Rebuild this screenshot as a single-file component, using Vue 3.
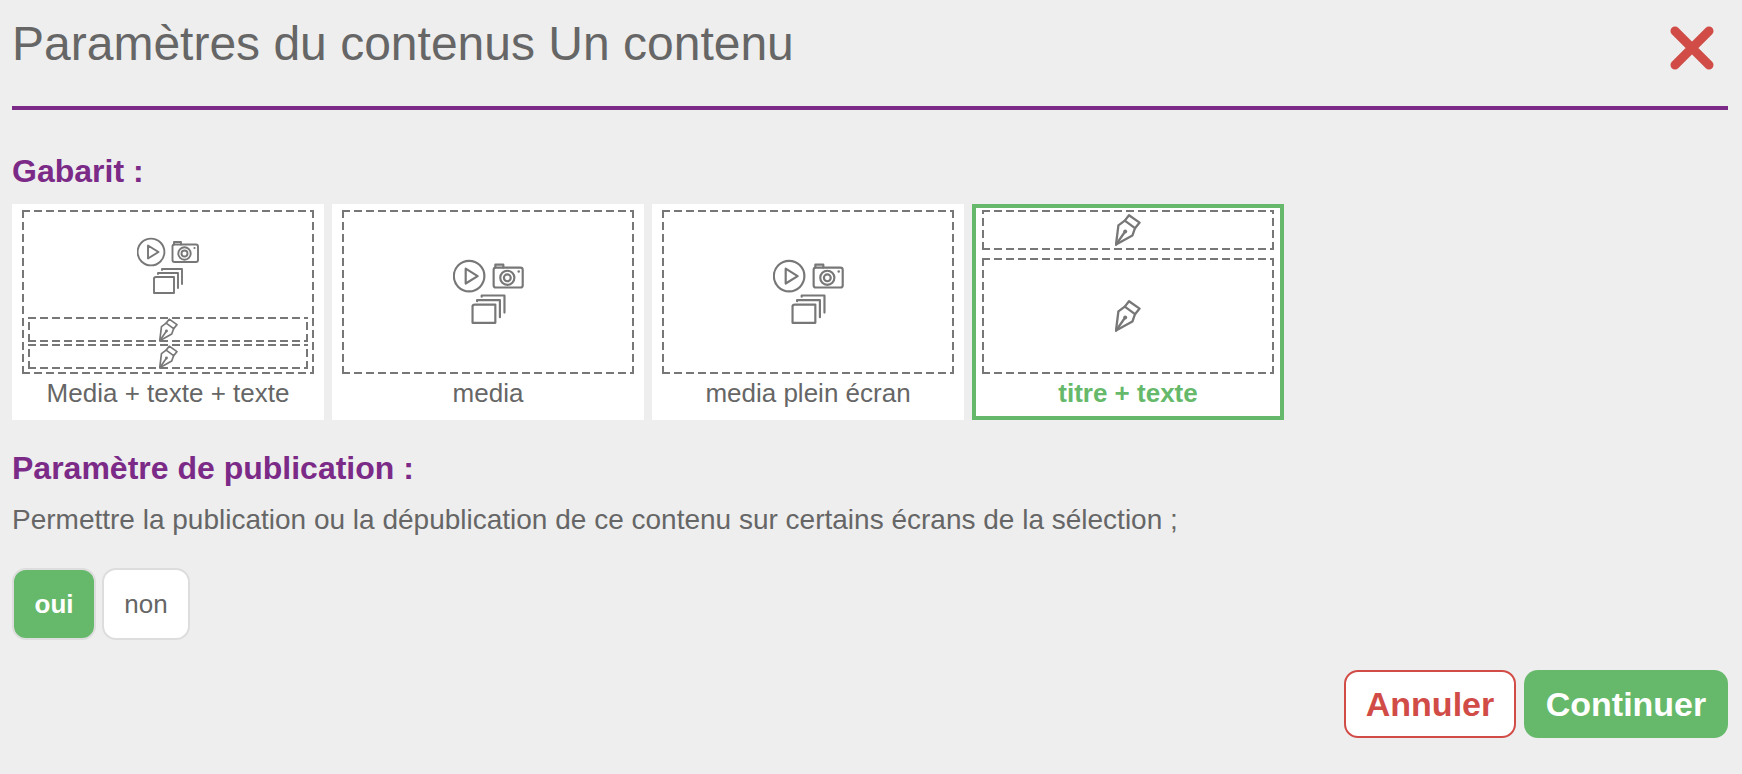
<script setup>
const templates = [
  { id: 'mtt', label: 'Media + texte + texte', zones: [{ type: 'media-mixed' }] },
  { id: 'm', label: 'media', zones: [{ type: 'media' }] },
  { id: 'mpe', label: 'media plein écran', zones: [{ type: 'media' }] },
  { id: 'tt', label: 'titre + texte', active: true, zones: [{ type: 'title' }, { type: 'text' }] }
]
</script>

<template>
  <main class="dialog">
    <svg class="sprite" aria-hidden="true">
      <symbol id="pen" viewBox="0 0 26 32">
        <g fill="none" stroke="#777" stroke-width="2.3" stroke-linejoin="round" stroke-linecap="round">
          <path d="M14 1.2 24.6 8.6 20 14.2 9.8 6.6Z" />
          <path d="M9.8 6.6 3.4 11.4 1 30.6 17.4 21.6 20 14.2" />
          <path d="M1 30.6 9.8 18" />
        </g>
        <circle cx="10.2" cy="17.4" r="2" fill="#777" />
      </symbol>
      <symbol id="media" viewBox="0 0 62 57">
        <g fill="none" stroke="#777" stroke-width="1.9" stroke-linejoin="round" stroke-linecap="round">
          <circle cx="14" cy="15" r="13.4" />
          <path d="M11 8.5 21.5 15 11 21.5Z" />
          <path d="M37 7.5V5H44V7.5" />
          <rect x="35.5" y="7.5" width="25.5" height="17.5" rx="2" />
          <circle cx="47.5" cy="16.5" r="6.2" />
          <circle cx="47.5" cy="16.5" r="3" />
          <path d="M17 41V56H37V40H19Q17 40 17 42Z" />
          <path d="M21 37V36H41V51" />
          <path d="M25 33V32H45V47" />
        </g>
        <circle cx="57.5" cy="11" r="1.1" fill="#777" />
      </symbol>
    </svg>

    <header class="head">
      <h1>Paramètres du contenus Un contenu</h1>
      <svg class="close" viewBox="0 0 44 44" aria-label="Fermer">
        <path d="M5 5 39 39M39 5 5 39" fill="none" stroke="#d14c47" stroke-width="9" stroke-linecap="round" />
      </svg>
    </header>

    <h2 class="gabarit">Gabarit :</h2>
    <section class="cards">
      <article v-for="t in templates" :key="t.id" class="card" :class="{ active: t.active }">
        <div class="zones">
          <template v-for="(z, i) in t.zones" :key="i">
            <div v-if="z.type === 'media-mixed'" class="zone mixed">
              <div class="mixed-media"><svg class="ico m-small"><use href="#media" /></svg></div>
              <div class="sub dash"><svg class="ico p-small"><use href="#pen" /></svg></div>
              <div class="sub dash"><svg class="ico p-small"><use href="#pen" /></svg></div>
            </div>
            <div v-else-if="z.type === 'media'" class="zone full dash">
              <svg class="ico m-big"><use href="#media" /></svg>
            </div>
            <div v-else-if="z.type === 'title'" class="zone title dash">
              <svg class="ico p-big"><use href="#pen" /></svg>
            </div>
            <div v-else class="zone text dash">
              <svg class="ico p-big"><use href="#pen" /></svg>
            </div>
          </template>
        </div>
        <p class="label">{{ t.label }}</p>
      </article>
    </section>

    <h2 class="publi">Paramètre de publication :</h2>
    <p class="desc">Permettre la publication ou la dépublication de ce contenu sur certains écrans de la sélection ;</p>

    <div class="toggle">
      <button class="yes">oui</button>
      <button class="no">non</button>
    </div>

    <footer class="actions">
      <button class="cancel">Annuler</button>
      <button class="go">Continuer</button>
    </footer>
  </main>
</template>

<style>
html, body { background: #eeeeee; }
</style>

<style scoped>
.dialog {
  box-sizing: border-box;
  width: 1742px;
  height: 774px;
  padding: 0 14px 0 12px;
  background: #eeeeee;
  color: #666;
  font-family: "Liberation Sans", Arial, sans-serif;
}
.sprite { width: 0; height: 0; position: absolute; }
.head {
  height: 106px;
  border-bottom: 4px solid #7b2a87;
  display: flex;
  justify-content: space-between;
  align-items: flex-start;
}
h1 {
  margin: 17px 0 0;
  font-size: 48px;
  line-height: 54px;
  font-weight: 400;
  color: #666;
}
.close { width: 44px; height: 44px; margin: 26px 14px 0 0; }
h2 {
  margin: 0;
  font-size: 32px;
  line-height: 34px;
  font-weight: 700;
  color: #7b2a87;
}
.gabarit { margin-top: 44px; }
.cards { display: flex; gap: 8px; margin-top: 16px; }
.card {
  box-sizing: border-box;
  width: 312px;
  height: 216px;
  padding: 6px 10px 0;
  background: #fff;
  text-align: center;
}
.card.active { border: 4px solid #66b96a; padding: 2px 6px 0; }
.zones { display: flex; flex-direction: column; gap: 8px; height: 164px; }
.zone {
  box-sizing: border-box;
  display: flex;
  align-items: center;
  justify-content: center;
}
.dash, .mixed {
  background-image:
    repeating-linear-gradient(90deg, #777 0 8px, transparent 8px 12px),
    repeating-linear-gradient(90deg, #777 0 8px, transparent 8px 12px),
    repeating-linear-gradient(0deg, #777 0 8px, transparent 8px 12px),
    repeating-linear-gradient(0deg, #777 0 8px, transparent 8px 12px);
  background-size: 100% 2px, 100% 2px, 2px 100%, 2px 100%;
  background-position: 0 0, 0 100%, 0 0, 100% 0;
  background-repeat: no-repeat;
}
.full { height: 164px; }
.title { height: 40px; }
.text { height: 116px; }
.mixed { height: 164px; flex-direction: column; align-items: stretch; justify-content: flex-start; padding: 0 6px; }
.mixed-media { height: 107px; display: flex; align-items: center; justify-content: center; padding-top: 4px; box-sizing: border-box; }
.sub {
  box-sizing: border-box;
  height: 25px;
  margin-bottom: 2px;
  display: flex;
  align-items: center;
  justify-content: center;
}
.ico { display: block; overflow: visible; }
.m-small { width: 62px; height: 57px; }
.m-big { width: 71px; height: 65px; margin-top: -2px; }
.p-small { width: 19px; height: 24px; }
.p-big { width: 26px; height: 32px; }
.label { margin: 4px 0 0; font-size: 26px; line-height: 30px; color: #666; }
.active .label { color: #66b96a; font-weight: 700; }
.publi { margin-top: 31px; }
.desc { margin: 19px 0 0; font-size: 28px; line-height: 32px; color: #666; }
button { font-family: inherit; cursor: pointer; box-sizing: border-box; }
.toggle { display: flex; gap: 6px; margin-top: 32px; }
.toggle button {
  height: 72px;
  border: 2px solid #ddd;
  border-radius: 14px;
  font-size: 26px;
  padding: 0;
}
.yes { width: 84px; background: #66b96a; color: #fff; font-weight: 700; font-size: 27px; }
.no { width: 88px; background: #fff; color: #666; }
.actions { display: flex; justify-content: flex-end; gap: 8px; margin-top: 30px; }
.actions button { height: 68px; border-radius: 14px; font-size: 34px; font-weight: 700; padding: 0; }
.cancel { width: 172px; background: #fff; color: #d14c47; border: 2px solid #d14c47; }
.go { width: 204px; background: #66b96a; color: #fff; border: 0; }
</style>
